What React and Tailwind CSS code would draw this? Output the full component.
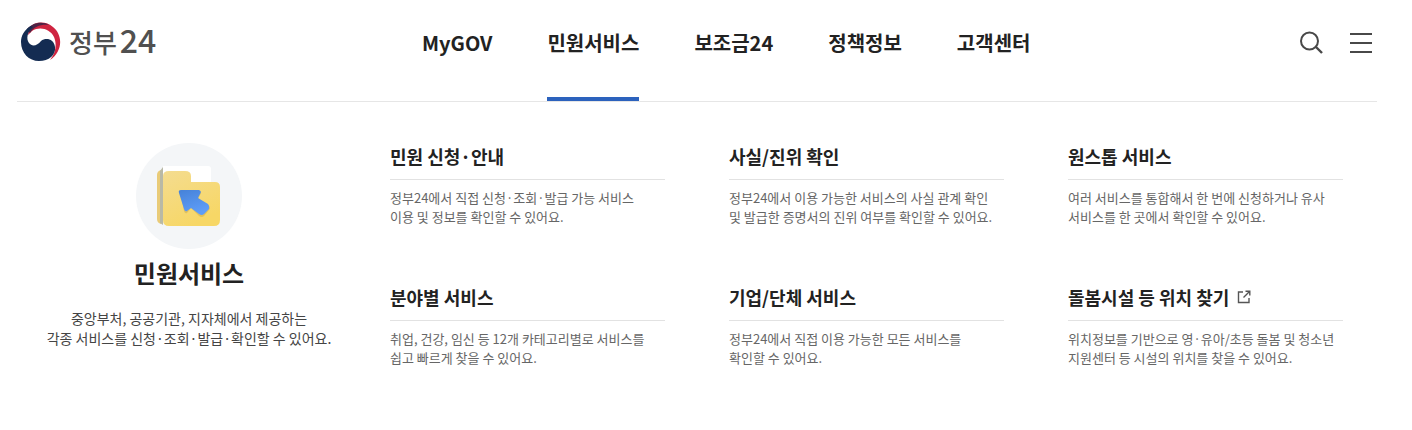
import React, { useState } from 'react';

const navItems = ['MyGOV', '민원서비스', '보조금24', '정책정보', '고객센터'];

const services = [
  { title: '민원 신청·안내', lines: ['정부24에서 직접 신청·조회·발급 가능 서비스', '이용 및 정보를 확인할 수 있어요.'] },
  { title: '사실/진위 확인', lines: ['정부24에서 이용 가능한 서비스의 사실 관계 확인', '및 발급한 증명서의 진위 여부를 확인할 수 있어요.'] },
  { title: '원스톱 서비스', lines: ['여러 서비스를 통합해서 한 번에 신청하거나 유사', '서비스를 한 곳에서 확인할 수 있어요.'] },
  { title: '분야별 서비스', lines: ['취업, 건강, 임신 등 12개 카테고리별로 서비스를', '쉽고 빠르게 찾을 수 있어요.'] },
  { title: '기업/단체 서비스', lines: ['정부24에서 직접 이용 가능한 모든 서비스를', '확인할 수 있어요.'] },
  { title: '돌봄시설 등 위치 찾기', external: true, lines: ['위치정보를 기반으로 영·유아/초등 돌봄 및 청소년', '지원센터 등 시설의 위치를 찾을 수 있어요.'] },
];

const Emblem = () => (
  <svg width="41" height="40" viewBox="0 0 41 40" aria-hidden="true">
    <path d="M9 6C15 -1 26 -1 33 5C43 13 43 29 30 38C36 31 37 22 34 15C30 7 20 4 12 9L8 13Z" fill="#cf2440" />
    <path d="M7 7C13 0 23 -1 29 3C22 2 14 4 10 11Z" fill="#4d2345" />
    <path d="M11 4C4 8 1 14 1 20C1 31 9 39 19 39C29 39 36 33 35 25C34 17 26 15 21 19C17 24 12 25 9 21C6 17 7 10 13 5Z" fill="#142c52" />
  </svg>
);

const SearchIcon = () => (
  <svg width="24" height="24" viewBox="0 0 24 24" fill="none" stroke="#484848" strokeWidth="2" aria-hidden="true">
    <circle cx="9.5" cy="10" r="8.5" />
    <path d="M15.5 15.5L22 22" strokeWidth="2.4" />
  </svg>
);

const MenuIcon = () => (
  <svg width="22" height="22" viewBox="0 0 22 22" stroke="#484848" strokeWidth="2" aria-hidden="true">
    <path d="M0 2H22M0 11H22M0 20H22" />
  </svg>
);

const ExternalIcon = () => (
  <svg width="14" height="14" viewBox="0 0 14 14" fill="none" stroke="#555" strokeWidth="1.4" aria-hidden="true">
    <path d="M6 2H1.5V12.5H12V8M8.5 1.2H12.8V5.5M12.5 1.5L6.5 7.5" />
  </svg>
);

const FolderArt = () => (
  <svg width="106" height="106" viewBox="0 0 106 106" aria-hidden="true">
    <defs>
      <linearGradient id="folder" x1="0" y1="0" x2="0.5" y2="1">
        <stop offset="0" stopColor="#f4dc90" />
        <stop offset="1" stopColor="#f7d766" />
      </linearGradient>
      <linearGradient id="arrow" x1="0" y1="0" x2="0.4" y2="1">
        <stop offset="0" stopColor="#4682d8" />
        <stop offset="1" stopColor="#5e9df8" />
      </linearGradient>
    </defs>
    <circle cx="53" cy="53" r="53" fill="#f4f6f8" />
    <path d="M27 23H72Q75 23 75 26V50H27Z" fill="#fff" />
    <path d="M21 32Q21 28 25 27V81Q21 80 21 76Z" fill="#e9cb78" />
    <path d="M24 28L27 24V82L24 80Z" fill="#b9b9a6" />
    <path d="M27 33Q27 28 33 28H49Q55 28 55 33V39H79Q84 39 84 44V77Q84 83 78 83H33Q27 83 27 77Z" fill="url(#folder)" />
    <path d="M44 49Q43 46 46 46H63Q65 47 63 49L61 53L72 60Q74 62 72 64L67 70Q65 72 62 70L54 62L50 67Q48 68 47 65Z" fill="#b9973c" opacity="0.35" transform="translate(1 3)" />
    <path d="M43 50Q42 47 45 47H63Q66 48 64 51L62 55L72 61Q74 63 73 66L68 71Q66 73 63 71L55 65L51 68Q49 69 48 66Z" fill="url(#arrow)" />
  </svg>
);

const App = () => {
  const [active, setActive] = useState('민원서비스');

  return (
    <div className="bg-white pl-[17px] pr-[35px] font-['Noto_Sans_CJK_KR','Noto_Sans',sans-serif] text-[#222]">
      <header className="flex h-[102px] border-b border-[#e6e6e6]">
        <a href="#home" className="flex h-[84px] w-[405px] shrink-0 items-center gap-2 pl-[3px] text-[#505050]">
          <Emblem />
          <span className="flex items-baseline gap-[3px] pb-1 text-[26px] leading-[40px] font-medium">
            정부<span className="text-[32px]">24</span>
          </span>
        </a>
        <nav className="flex flex-1 gap-[55px]">
          {navItems.map((item) => (
            <button
              key={item}
              type="button"
              onClick={() => setActive(item)}
              className={`border-b-4 pb-[11px] text-[20px] font-bold whitespace-nowrap ${active === item ? 'border-[#2c62bd]' : 'border-transparent'}`}
            >
              {item}
            </button>
          ))}
        </nav>
        <div className="flex h-[86px] items-center gap-[26px] pr-[5px]">
          <button type="button" aria-label="검색"><SearchIcon /></button>
          <button type="button" aria-label="전체메뉴"><MenuIcon /></button>
        </div>
      </header>

      <main className="flex gap-[29px] pt-10 pr-[34px]">
        <section className="flex w-[344px] shrink-0 flex-col items-center pt-px text-center">
          <FolderArt />
          <h1 className="mt-[6px] text-[24px] leading-[36px] font-bold">민원서비스</h1>
          <p className="mt-[17px] text-[14px] leading-[20px] whitespace-nowrap text-[#444]">
            중앙부처, 공공기관, 지자체에서 제공하는<br />
            각종 서비스를 신청·조회·발급·확인할 수 있어요.
          </p>
        </section>

        <section className="grid flex-1 grid-cols-3 content-start gap-x-16 gap-y-[57px]">
          {services.map((service) => (
            <article key={service.title}>
              <h2 className="border-b border-[#e2e2e2] pb-[9px] text-[18px] leading-[28px] font-bold">
                <a href="#service" className="flex items-center gap-2">
                  {service.title}
                  {service.external && <ExternalIcon />}
                </a>
              </h2>
              <p className="mt-[8px] text-[13px] leading-[19px] whitespace-nowrap text-[#666]">
                {service.lines[0]}<br />
                {service.lines[1]}
              </p>
            </article>
          ))}
        </section>
      </main>
    </div>
  );
};

export default App;
